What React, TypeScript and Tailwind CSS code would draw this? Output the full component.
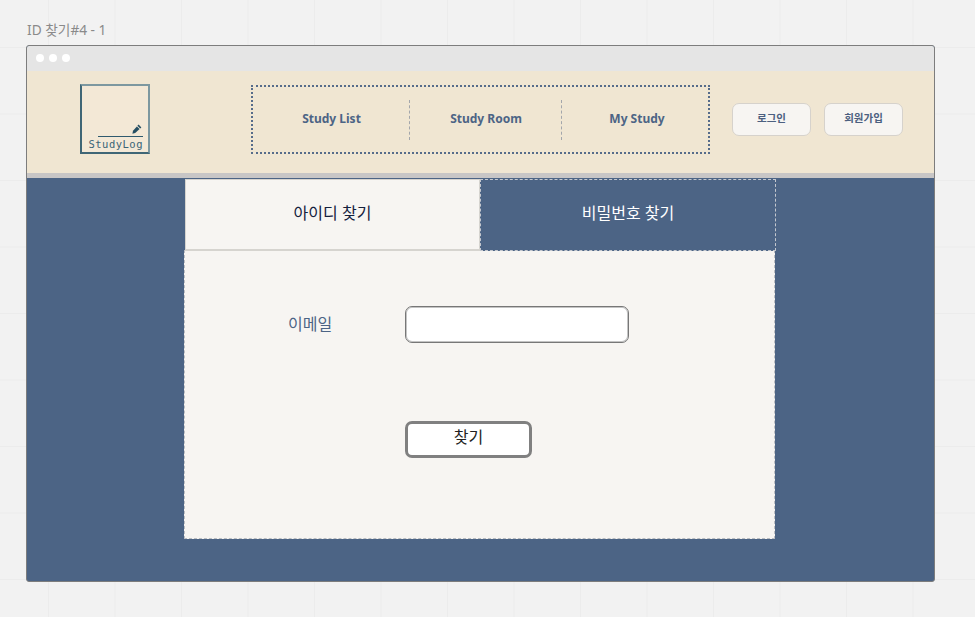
const sans = "font-['Noto_Sans','Open_Sans','Noto_Sans_CJK_KR',sans-serif]"

function NavItem({ label, divider, width }: { label: string; divider?: boolean; width: string }) {
  return (
    <div className={`flex items-center justify-center relative pb-[2px] ${width}`}>
      <span className="text-[12px] font-bold text-[#4c6485] leading-none">{label}</span>
      {divider && <div className="absolute right-0 top-[13px] h-[40px] border-r border-dashed border-[#a3a6ab]" />}
    </div>
  )
}

function HeaderButton({ label }: { label: string }) {
  return (
    <button className="w-[79px] h-[33px] rounded-[7px] bg-[#f7f5f2] border border-[#d6d2cc] text-[10.5px] font-bold text-[#4c6080] flex items-center justify-center pb-[1px]">
      {label}
    </button>
  )
}

function PenIcon() {
  return (
    <svg viewBox="0 0 10 10" className="w-[10px] h-[10px] mr-[1px] mt-[38px]" fill="#264f63">
      <path d="M6.6 .6 L9.4 3.4 L8.2 4.6 L5.4 1.8 Z" />
      <path d="M4.9 2.4 L7.6 5.1 L3.2 9 L.4 9.7 L1 6.8 Z" />
    </svg>
  )
}

export default function App() {
  return (
    <div className={`w-[975px] h-[617px] overflow-hidden bg-[#f2f2f2] bg-[linear-gradient(to_right,#ececec_1px,transparent_1px),linear-gradient(to_bottom,#ececec_1px,transparent_1px)] bg-[size:66.5px_66.5px] bg-[position:48px_47px] pl-[26px] pt-[20px] ${sans}`}>
      <div className="text-[13.7px] leading-[19px] h-[25px] pl-[1px] text-[#8a8a8a]">ID 찾기#4 - 1</div>

      {/* window frame */}
      <div className="w-[909px] h-[537px] border border-[#7d7d7d] rounded-[3px] overflow-hidden flex flex-col bg-[#4c6485]">
        <div className="h-[25px] shrink-0 bg-[#e5e5e5] flex items-center gap-[5px] pl-[9px] pb-[1px]">
          <span className="w-[8px] h-[8px] rounded-full bg-white" />
          <span className="w-[8px] h-[8px] rounded-full bg-white" />
          <span className="w-[8px] h-[8px] rounded-full bg-white" />
        </div>

        <header className="h-[102px] shrink-0 bg-[#f0e6d2] flex items-start pl-[53px] pt-[13px]">
          <div className="w-[70px] h-[70px] bg-[#f3e8d6] border-2 border-t-[#7d98a0] border-r-[#7d98a0] border-l-[#3f6676] border-b-[#3f6676] flex flex-col items-end pr-[5px] text-[#3a6476]">
            <PenIcon />
            <div className="w-[45px] border-t border-[#2f5a6e] mt-[2px]" />
            <span className="font-['DejaVu_Sans_Mono',monospace] text-[10.5px] leading-[13px] tracking-[0.5px] mt-[1px]">StudyLog</span>
          </div>

          <nav className="ml-[101px] mt-[1px] w-[459px] h-[69px] border-2 border-dotted border-[#566c8a] flex">
            <NavItem label="Study List" divider width="w-[157px]" />
            <NavItem label="Study Room" divider width="w-[152px]" />
            <NavItem label="My Study" width="flex-1 pl-[4px]" />
          </nav>

          <div className="ml-[22px] mt-[19px] flex gap-[13px]">
            <HeaderButton label="로그인" />
            <HeaderButton label="회원가입" />
          </div>
        </header>

        <div className="h-[5px] shrink-0 bg-[#c8c6c6]" />

        <main className="flex-1 pl-[157px]">
          <div className="w-[592px] flex">
            <div className="w-[295px] h-[72px] ml-[1px] mt-[1px] pb-[4px] bg-[#f7f5f2] border-x border-b-2 border-t border-[#d6d4cf] text-[16px] text-[#14213d] flex items-center justify-center">
              아이디 찾기
            </div>
            <div className="w-[296px] h-[72px] mt-[1px] pb-[4px] bg-[#4c6485] border border-dashed border-[#c4c8cf] text-[16px] text-white flex items-center justify-center">
              비밀번호 찾기
            </div>
          </div>
          <div className="w-[591px] h-[289px] -mt-[1px] bg-[#f7f5f2] border border-dashed border-[#b9bcc1] border-t-0 pt-[56px] pl-[220px]">
            <div className="flex items-center relative">
              <span className="absolute -left-[117px] top-[6px] text-[16px] text-[#4c6485]">이메일</span>
              <div className="w-[224px] h-[37px] bg-white border border-[#777777] rounded-[7px] shadow-[inset_0_0_0_1px_#c4c4c4]" />
            </div>
            <button className="mt-[78px] w-[127px] h-[37px] bg-white border-[3px] border-[#808080] rounded-[7px] text-[16px] leading-[20px] text-[#222] flex items-start justify-center pt-[3px]">
              찾기
            </button>
          </div>
        </main>
      </div>
    </div>
  )
}
